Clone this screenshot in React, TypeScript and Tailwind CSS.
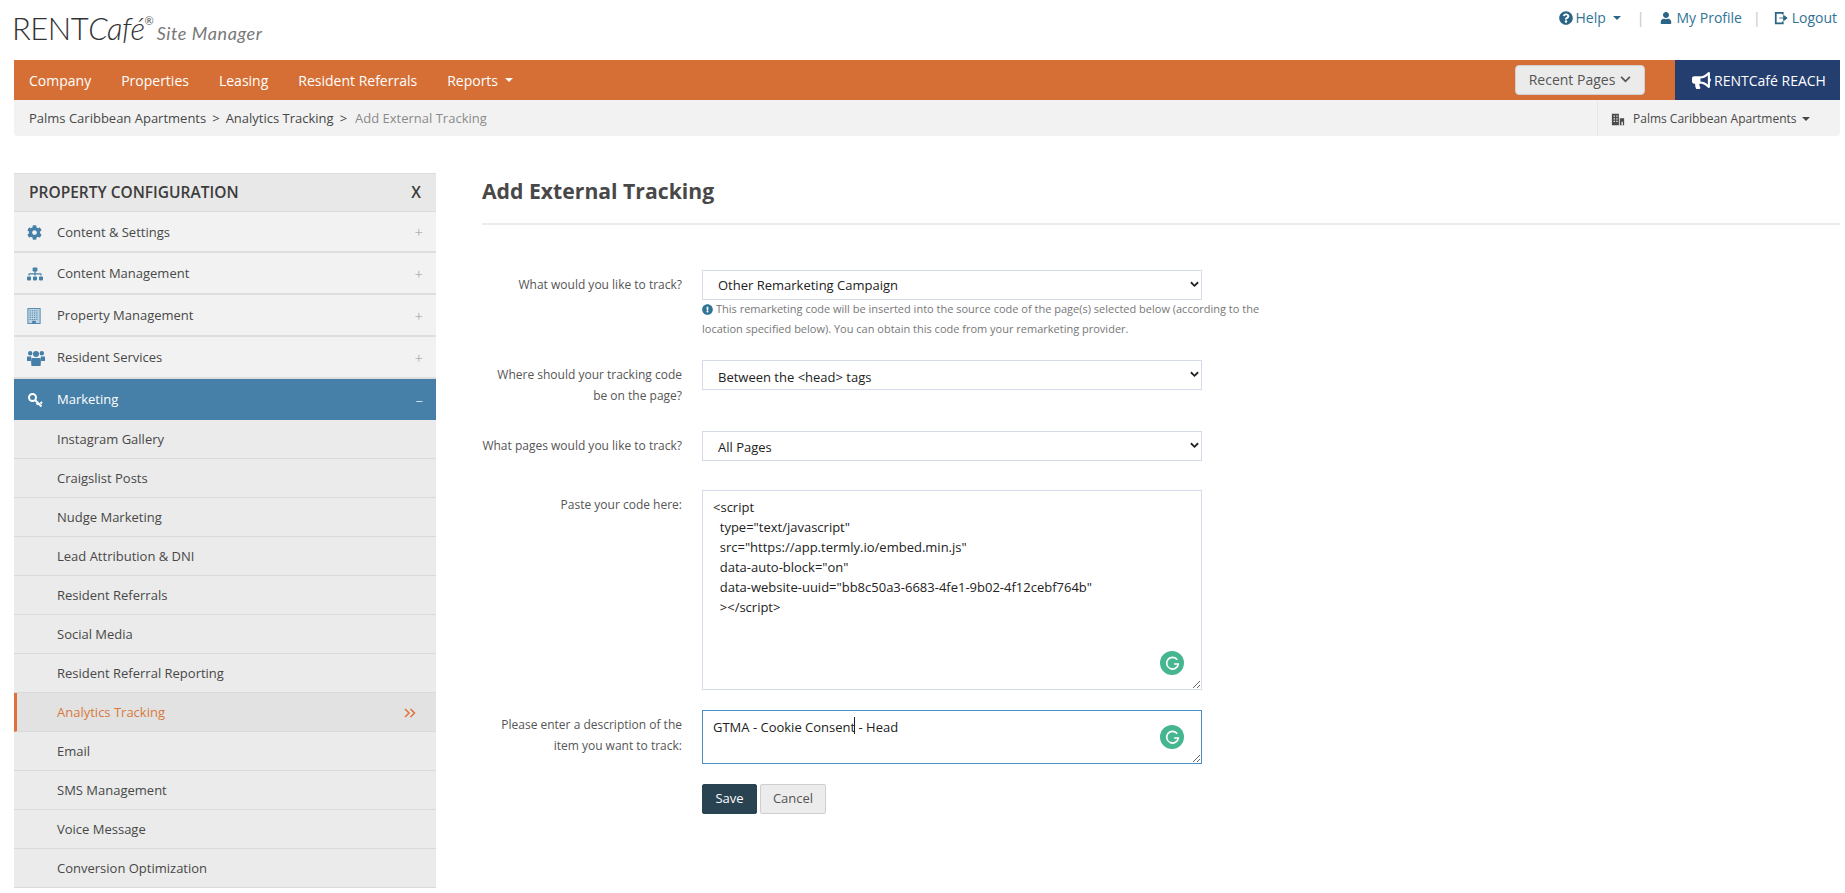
import type { ReactNode } from 'react';
import {
  FaBullhorn,
  FaCog,
  FaExclamationCircle,
  FaQuestionCircle,
  FaSitemap,
  FaUser,
} from 'react-icons/fa';

const Caret = ({ className }: { className: string }) => (
  <span className={`inline-block w-0 h-0 border-x-[4px] border-x-transparent border-t-[4px] ${className}`} />
);

const LogoutIcon = () => (
  <svg viewBox="0 0 16 16" className="w-[14px] h-[14px]" fill="none" stroke="currentColor">
    <path d="M10 4V2H2v12h8v-2" strokeWidth="2" />
    <path d="M6 8h5V5l4 3-4 3V8" fill="currentColor" strokeWidth="1" />
  </svg>
);

const TowerIcon = () => (
  <svg viewBox="0 0 16 18" className="w-[14px] h-[16px]">
    <rect x="1" y="0.5" width="14" height="17" fill="#bcd3e2" stroke="#4680a8" />
    <path d="M3 3h10M3 5.5h10M3 8h10M3 10.5h10M3 13h10" stroke="#4680a8" strokeDasharray="1.5 1" />
    <rect x="6" y="14.5" width="4" height="3" fill="#4680a8" />
  </svg>
);

const PeopleIcon = () => (
  <svg viewBox="0 0 18 16" className="w-[18px] h-[16px]" fill="currentColor">
    <circle cx="3.200" cy="3.200" r="2.200" />
    <circle cx="14.800" cy="3.200" r="2.200" />
    <circle cx="9" cy="4" r="3" />
    <path d="M0 6.500h4.200L4 11H0zM13.800 6.500H18V11h-4z" />
    <path d="M4.500 8h9c.5 1.500.5 5 0 8h-9c-.5-3-.5-6.500 0-8z" />
  </svg>
);

const KeyIcon = () => (
  <svg viewBox="0 0 16 16" className="w-[16px] h-[16px]" fill="none" stroke="currentColor" strokeWidth="2">
    <circle cx="5.500" cy="5.500" r="3.500" />
    <path d="M8.500 8.500l6 6M11 11l-1.500 1.500M13.500 11.500l1.500-1.500" />
  </svg>
);

const OfficeIcon = () => (
  <svg viewBox="0 0 16 16" className="w-[14px] h-[14px]" fill="#4a4a4a">
    <path d="M1 2h8v13H1zM10 7h5v8h-5z" />
    <path d="M3 4h1.500v1.500H3zM6 4h1.500v1.500H6zM3 7h1.500v1.500H3zM6 7h1.500v1.500H6zM3 10h1.500v1.500H3zM6 10h1.500v1.500H6zM12 11h1.500v4H12z" fill="#f2f2f2" />
  </svg>
);

const DoubleChevron = () => (
  <svg viewBox="0 0 12 10" className="w-[12px] h-[10px]" fill="none" stroke="#e0703a" strokeWidth="1.500">
    <path d="M1 1l4 4-4 4M6.500 1l4 4-4 4" />
  </svg>
);

const Grammarly = () => (
  <span className="absolute right-[18px] bottom-[15px] w-6 h-6 rounded-full bg-[#45b68f] flex items-center justify-center">
    <svg viewBox="0 0 16 16" className="w-[17px] h-[17px]" fill="none" stroke="#fff" strokeWidth="1.500">
      <path d="M12.500 4.500A5.500 5.500 0 1 0 13.500 8.500H9.500" />
    </svg>
  </span>
);

const sections: { name: string; icon: ReactNode }[] = [
  { name: 'Content & Settings', icon: <FaCog size={15} /> },
  { name: 'Content Management', icon: <FaSitemap size={16} /> },
  { name: 'Property Management', icon: <TowerIcon /> },
  { name: 'Resident Services', icon: <PeopleIcon /> },
];

const marketingItems = [
  'Instagram Gallery',
  'Craigslist Posts',
  'Nudge Marketing',
  'Lead Attribution & DNI',
  'Resident Referrals',
  'Social Media',
  'Resident Referral Reporting',
  'Analytics Tracking',
  'Email',
  'SMS Management',
  'Voice Message',
  'Conversion Optimization',
];

const Sidebar = () => (
  <aside className="w-[422px] shrink-0 text-[13px] text-[#484848]">
    <div className="h-[39px] bg-[#e8e8e8] border-t border-t-[#dcdcdc] border-b border-b-[#dcdcdc] flex items-center justify-between px-[15px] text-[15.500px] font-semibold text-[#3c3c3c]">
      <span>PROPERTY CONFIGURATION</span>
      <span>X</span>
    </div>
    {sections.map((s, i) => (
      <div
        key={s.name}
        className={`${i === 0 ? 'h-[41px]' : 'h-[42px]'} pt-[2px] bg-[#f2f2f2] border-b-2 border-b-[#dedede] flex items-center`}
      >
        <span className="w-[42px] pl-[13px] text-[#4680a8]">{s.icon}</span>
        <span className="ml-px flex-1">{s.name}</span>
        <span className="pr-[13px] text-[15px] font-light text-[#9a9a9a]">+</span>
      </div>
    ))}
    <div className="h-[41px] bg-[#4680a8] flex items-center text-white">
      <span className="w-[42px] pl-[13px]">
        <KeyIcon />
      </span>
      <span className="ml-px flex-1">Marketing</span>
      <span className="pr-[13px] text-[15px] font-light">–</span>
    </div>
    <div className="bg-[#ebebeb]">
      {marketingItems.map((item) => {
        const active = item === 'Analytics Tracking';
        return (
          <div
            key={item}
            className={
              active
                ? 'h-[39px] pt-[2px] bg-[#e2e2e2] border-l-[3px] border-l-[#e0703a] border-b border-b-[#dadada] flex items-center justify-between pl-[40px] pr-[20px] text-[#d87a3e]'
                : 'h-[39px] pt-[2px] border-b border-b-[#dadada] flex items-center pl-[43px]'
            }
          >
            <span>{item}</span>
            {active && <DoubleChevron />}
          </div>
        );
      })}
    </div>
  </aside>
);

const Field = ({ label, children, className }: { label: ReactNode; children: ReactNode; className: string }) => (
  <div className={`flex ${className}`}>
    <label className="w-[200px] shrink-0 pt-[4px] text-right text-[12px] leading-[21px] text-[#555]">{label}</label>
    <div className="ml-[20px] w-[500px] shrink-0">{children}</div>
  </div>
);

const SelectBox = ({ value, padTop }: { value: string; padTop: string }) => (
  <div className="relative">
    <select
      defaultValue={value}
      className={`w-full h-[30px] appearance-none bg-white border border-[#d5dbe8] pl-[15px] pr-8 text-[13px] text-[#222] outline-none ${padTop}`}
    >
      <option>{value}</option>
    </select>
    <svg viewBox="0 0 10 7" className="absolute right-[3px] top-[11px] w-[9px] h-[7px]" fill="none" stroke="#222" strokeWidth="2">
      <path d="M1 1l4 4 4-4" />
    </svg>
  </div>
);

const scriptCode = `<script
  type="text/javascript"
  src="https://app.termly.io/embed.min.js"
  data-auto-block="on"
  data-website-uuid="bb8c50a3-6683-4fe1-9b02-4f12cebf764b"
  ></script>`;

const Form = () => (
  <main className="ml-[46px] flex-1 pr-[5px]">
    <h1 className="h-[52px] text-[21.200px] leading-[36px] font-bold text-[#484848] border-b-2 border-b-[#ebebeb]">
      Add External Tracking
    </h1>
    <div className="pt-[45px]">
      <Field label="What would you like to track?" className="h-[90px]">
        <SelectBox value="Other Remarketing Campaign" padTop="pt-[2px]" />
        <p className="-mt-px w-[560px] text-[11px] leading-[20px] text-[#777]">
          <FaExclamationCircle size={11} className="inline mb-[2px] mr-[3px] text-[#2f7396]" />
          This remarketing code will be inserted into the source code of the page(s) selected below (according to the
          location specified below). You can obtain this code from your remarketing provider.
        </p>
      </Field>
      <Field
        label={
          <>
            Where should your tracking code
            <br />
            be on the page?
          </>
        }
        className="h-[71px]"
      >
        <SelectBox value="Between the <head> tags" padTop="pt-[5px]" />
      </Field>
      <Field label="What pages would you like to track?" className="h-[59px]">
        <SelectBox value="All Pages" padTop="pt-[4px]" />
      </Field>
      <Field label="Paste your code here:" className="h-[220px]">
        <div className="relative">
          <textarea
            defaultValue={scriptCode}
            className="block w-full h-[200px] bg-white border border-[#d5dbe8] pl-[10px] pr-3 pt-[6px] pb-[6px] text-[13px] leading-[20px] text-[#222] outline-none"
          />
          <Grammarly />
        </div>
      </Field>
      <Field
        label={
          <>
            Please enter a description of the
            <br />
            item you want to track:
          </>
        }
        className="h-[74px]"
      >
        <div className="relative">
          <textarea
            defaultValue="GTMA - Cookie Consent - Head"
            className="block w-full h-[54px] bg-white border border-[#4a90c8] pl-[10px] pr-3 pt-[6px] pb-[6px] text-[13px] leading-[20px] text-[#222] outline-none"
          />
          <span className="absolute left-[152px] top-[7px] w-px h-[17px] bg-[#222]" />
          <Grammarly />
        </div>
      </Field>
      <div className="ml-[220px] flex gap-[3px]">
        <button className="w-[55px] h-[30px] bg-[#2a4353] border border-[#2a4353] rounded-[2px] text-[13px] font-medium text-white">
          Save
        </button>
        <button className="w-[66px] h-[30px] bg-[#ececec] border border-[#cfcfcf] rounded-[2px] text-[13px] text-[#555]">
          Cancel
        </button>
      </div>
    </div>
  </main>
);

export default function App() {
  return (
    <div className="w-[1845px] h-[893px] overflow-hidden bg-white font-['Open_Sans',sans-serif]">
      <header className="h-[60px] pl-[12px] pr-[8px] flex justify-between items-start">
        <div className="pt-[8px] flex items-baseline font-['Lato',sans-serif] text-[#333]">
          <span className="text-[31px] leading-[40px] font-light tracking-[-0.5px]">
            RENT<span className="italic">Café</span>
          </span>
          <span className="self-start mt-[5px] text-[11px] text-[#555]">®</span>
          <span className="ml-[3px] text-[18px] italic text-[#777] tracking-[0.6px]">Site Manager</span>
        </div>
        <div className="pt-[7px] flex items-center text-[14px] text-[#2f7396]">
          <FaQuestionCircle size={14} className="mr-[3px] text-[#2a6486]" />
          <span>Help</span>
          <Caret className="ml-[7px] border-t-[#2a6486]" />
          <span className="ml-[16px] mr-[15px] text-[#c4c4c4]">|</span>
          <FaUser size={12} className="mr-[5px] text-[#2a6486]" />
          <span>My Profile</span>
          <span className="ml-[11px] mr-[13px] text-[#c4c4c4]">|</span>
          <span className="mr-[4px] text-[#2a6486]">
            <LogoutIcon />
          </span>
          <span>Logout</span>
        </div>
      </header>

      <nav className="mx-[14px] mr-[5px] h-[40px] bg-[#d66f35] flex items-center text-[14px] text-white">
        <div className="pl-[15px] flex items-center gap-[30px]">
          <span>Company</span>
          <span>Properties</span>
          <span>Leasing</span>
          <span>Resident Referrals</span>
          <span className="flex items-center">
            Reports
            <Caret className="ml-[7px] border-t-white" />
          </span>
        </div>
        <button className="ml-auto mr-[30px] w-[130px] h-[30px] bg-[#ebebeb] border border-[#cfcfcf] rounded-[4px] flex items-center justify-center gap-[5px] pb-[2px] text-[#555]">
          Recent Pages
          <svg viewBox="0 0 12 8" className="w-[11px] h-[7px]" fill="none" stroke="#555" strokeWidth="2">
            <path d="M1 1l5 5 5-5" />
          </svg>
        </button>
        <div className="w-[165px] h-full bg-[#233e6f] flex items-center justify-center gap-[3px] pl-[3px]">
          <FaBullhorn size={19} />
          RENTCafé REACH
        </div>
      </nav>

      <div className="mx-[14px] mr-[5px] h-[36px] bg-[#f2f2f2] rounded-b-[3px] flex items-center justify-between pt-px text-[13px] text-[#484848]">
        <div className="pl-[15px] flex">
          <span>Palms Caribbean Apartments</span>
          <span className="mx-[6px]">&gt;</span>
          <span>Analytics Tracking</span>
          <span className="ml-[6px] mr-[8px]">&gt;</span>
          <span className="text-[#8a8a8a]">Add External Tracking</span>
        </div>
        <div className="w-[243px] h-full border-l border-l-[#e6e6e6] flex items-center pl-[13px] text-[12px]">
          <OfficeIcon />
          <span className="ml-[8px]">Palms Caribbean Apartments</span>
          <Caret className="ml-[5px] border-t-[#484848]" />
        </div>
      </div>

      <div className="mt-[36px] pl-[14px] flex">
        <div className="pt-px flex">
          <Sidebar />
        </div>
        <div className="pt-px flex-1 flex">
          <Form />
        </div>
      </div>
    </div>
  );
}
